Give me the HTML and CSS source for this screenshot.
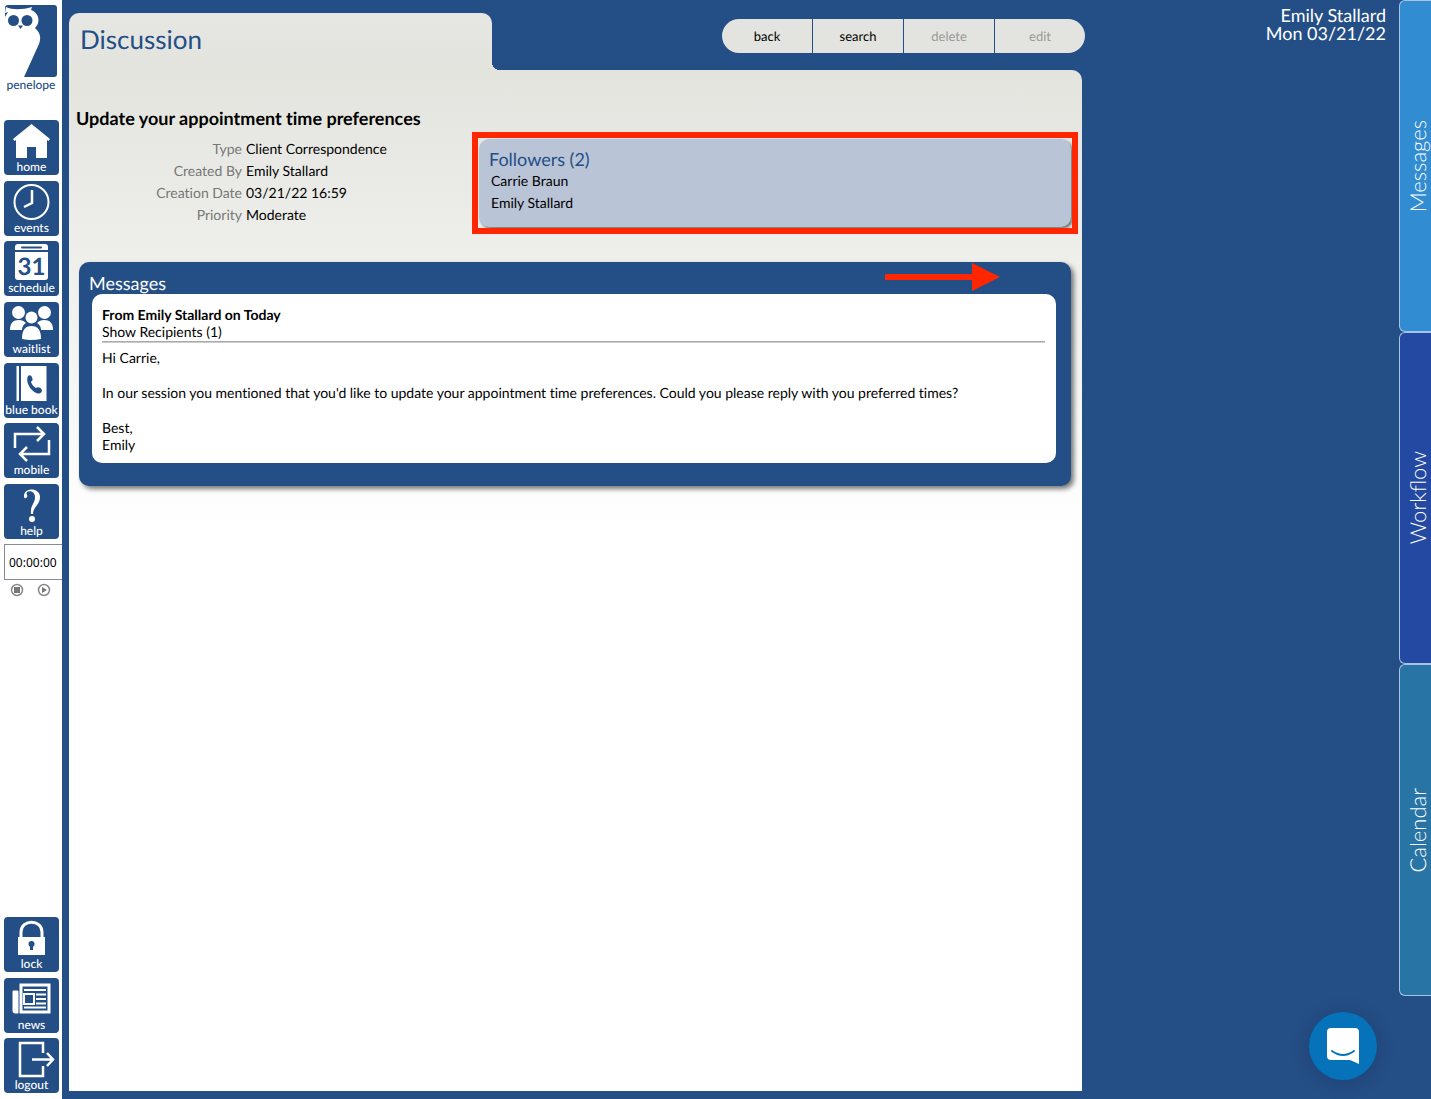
FILE: index.html
```html
<!DOCTYPE html>
<html lang="en">
<head>
  <meta charset="utf-8">
  <meta name="viewport" content="width=device-width, initial-scale=1.0">
  <title>Discussion</title>
  <link rel="stylesheet" href="styles.css">
</head>

<body>
  <!-- left navigation -->
  <nav class="sidebar">
    <a class="logo" href="#">
      <svg width="52" height="72" viewBox="0 0 52 72">
        <rect width="52" height="72" rx="3" fill="#244e86"/>
        <path d="M0 8L1 2C7 5 17 5 27 2L26 5C31 7 33.500 11 33.500 15C33.500 18 32 21 30 23C36 28 36 34 34 39L19 72H0V12L3 7Z" fill="#fff"/>
        <circle cx="8.500" cy="15.500" r="5.500" fill="#244e86"/>
        <circle cx="22" cy="15.500" r="5.500" fill="#244e86"/>
        <path d="M13 20.500H18L15.500 24Z" fill="#244e86"/>
      </svg>
      <span>penelope</span>
    </a>

    <div class="menu menuTop">
      <a class="item" href="#">
        <svg viewBox="0 0 55 40"><path d="M27.500 4L46 19L44.500 21L43 20V38H32V27H23V38H12V20L10.500 21L9 19Z" fill="#fff"/></svg>
        <span>home</span>
      </a>
      <a class="item" href="#">
        <svg viewBox="0 0 55 40" fill="none" stroke="#fff" stroke-width="2"><circle cx="27.500" cy="21" r="17"/><path d="M28 9V22L20 26" stroke-width="2.500"/></svg>
        <span>events</span>
      </a>
      <a class="item" href="#">
        <svg viewBox="0 0 55 40"><path d="M14 3H41Q44 3 44 6V9H11V6Q11 3 14 3ZM11 11H44V36Q44 39 41 39H14Q11 39 11 36Z" fill="#fff"/><path d="M18 6.500H37" stroke="#244e86" stroke-width="2" stroke-linecap="round"/><text class="calDay" x="27.500" y="34" text-anchor="middle">31</text></svg>
        <span>schedule</span>
      </a>
      <a class="item" href="#">
        <svg viewBox="0 0 55 40" fill="#fff">
          <circle cx="14.500" cy="10.500" r="6.500"/><circle cx="40.500" cy="10.500" r="6.500"/>
          <path d="M6 28C6 21 9 18 15 18C18 18 20 19 22 21C19 23 18 25 18 28Z"/>
          <path d="M49 28C49 21 46 18 40 18C37 18 35 19 33 21C36 23 37 25 37 28Z"/>
          <circle cx="27.500" cy="15.500" r="6"/>
          <path d="M18 37C18 28 21 24 27.500 24S37 28 37 37Q27.500 39 18 37Z"/>
        </svg>
        <span>waitlist</span>
      </a>
      <a class="item" href="#">
        <svg viewBox="0 0 55 40"><path d="M12.500 3H15V38H12.500ZM17 3H42.500V38H17Z" fill="#fff"/><path d="M24 13C26 11 28 13 28.500 16C29 18 27 18 27 19C28 22 30 24 32 25C34 23 38 25 38 28C36 32 32 31 28 27C24 23 22 17 24 13Z" fill="#244e86"/></svg>
        <span>blue book</span>
      </a>
      <a class="item" href="#">
        <svg viewBox="0 0 55 40" fill="none" stroke="#fff" stroke-width="2.500"><path d="M11 25V11H40M33 4L40 11L33 18M45 17V31H16M23 24L16 31L23 38"/></svg>
        <span>mobile</span>
      </a>
      <a class="item" href="#">
        <svg viewBox="0 0 55 40" fill="#fff"><path d="M20 13C19 3 36 3 36 13C36 21 29 23 29 30H27C26 21 31 20 31 13C31 6 22 6 22.500 10C25 13 21 16 20 13Z"/><circle cx="28" cy="35" r="3"/></svg>
        <span>help</span>
      </a>
    </div>

    <input class="timer" type="text" value="00:00:00" aria-label="Timer" readonly>
    <div class="timerButtons">
      <button type="button" aria-label="Stop">
        <svg width="14" height="14"><circle cx="7" cy="7" r="5.500" fill="none" stroke="#888" stroke-width="1.500"/><rect x="4" y="4" width="6" height="6" fill="#777"/></svg>
      </button>
      <button type="button" aria-label="Start">
        <svg width="14" height="14"><circle cx="7" cy="7" r="5.500" fill="none" stroke="#888" stroke-width="1.500"/><path d="M5 4L10 7L5 10Z" fill="#777"/></svg>
      </button>
    </div>

    <div class="menu menuBottom">
      <a class="item" href="#">
        <svg viewBox="0 0 55 40"><path d="M17 21V15C17 2 38 2 38 15V21" fill="none" stroke="#fff" stroke-width="3"/><path d="M14 20H41V38H14Z" fill="#fff"/><circle cx="27.500" cy="27" r="3" fill="#244e86"/><path d="M26 27H29V33H26Z" fill="#244e86"/></svg>
        <span>lock</span>
      </a>
      <a class="item" href="#">
        <svg viewBox="0 0 55 40" fill="none" stroke="#fff"><path d="M17 7H45V34H17Z" stroke-width="3"/><path d="M9 13H14V35H11Q9 35 9 33Z" fill="#fff"/><path d="M20 12H42M20 29.500H42" stroke-width="2"/><path d="M20 16H30V26H20Z" fill="#244e86" stroke-width="2"/><path d="M32 16.500H42M32 21H42M32 25.500H42" stroke-width="2"/></svg>
        <span>news</span>
      </a>
      <a class="item" href="#">
        <svg viewBox="0 0 55 40" fill="none" stroke="#fff" stroke-width="2.500"><path d="M39 15V5H16V38H39V28M28 21.500H49M43 15L49 21.500L43 28"/></svg>
        <span>logout</span>
      </a>
    </div>
  </nav>

  <!-- page content -->
  <main class="content">
    <header class="top">
      <div class="folderTab"><h1>Discussion</h1></div>
      <div class="toolbar">
        <button type="button">back</button>
        <button type="button">search</button>
        <button type="button" disabled>delete</button>
        <button type="button" disabled>edit</button>
      </div>
    </header>

    <div class="folder">
      <div class="summary">
        <div class="details">
          <h2>Update your appointment time preferences</h2>
          <dl>
            <dt>Type</dt><dd>Client Correspondence</dd>
            <dt>Created By</dt><dd>Emily Stallard</dd>
            <dt>Creation Date</dt><dd>03/21/22 16:59</dd>
            <dt>Priority</dt><dd>Moderate</dd>
          </dl>
        </div>
        <section class="followers">
          <h3>Followers (2)</h3>
          <ul>
            <li>Carrie Braun</li>
            <li>Emily Stallard</li>
          </ul>
        </section>
      </div>

      <section class="messages">
        <h3>Messages</h3>
        <svg class="arrow" width="115" height="28"><path d="M0 11H87V0L115 14L87 28V17H0Z" fill="#ff2600"/></svg>
        <article class="message">
          <h4>From Emily Stallard on Today</h4>
          <a class="recipients" href="#">Show Recipients (1)</a>
          <hr>
          <p>Hi Carrie,</p>
          <p>In our session you mentioned that you'd like to update your appointment time preferences. Could you please reply with you preferred times?</p>
          <p>Best,<br>Emily</p>
        </article>
      </section>
    </div>
  </main>

  <div class="user">
    <div>Emily Stallard</div>
    <div>Mon 03/21/22</div>
  </div>

  <!-- drawers on the right edge -->
  <div class="drawers">
    <button type="button" class="drawer drawerMessages"><span>Messages</span></button>
    <button type="button" class="drawer drawerWorkflow"><span>Workflow</span></button>
    <button type="button" class="drawer drawerCalendar"><span>Calendar</span></button>
  </div>

  <button type="button" class="chat" aria-label="Open chat">
    <svg width="32" height="36" viewBox="0 0 32 36"><path d="M4 0H28Q32 0 32 4V36C29 35 26 33 23 32H4Q0 32 0 28V4Q0 0 4 0Z" fill="#fff"/><path d="M5 23Q16 31 27 23" fill="none" stroke="#0572b9" stroke-width="2" stroke-linecap="round"/></svg>
  </button>
</body>
</html>
```
FILE: styles.css
```css
* {
  box-sizing: border-box;
}
body {
  margin: 0;
  min-height: 100vh;
  display: grid;
  grid-template-columns: 62px minmax(0, 1fr) 314px 32px;
  background-color: #244e86;
  font-family: Lato, "Liberation Sans", sans-serif;
  font-size: 14px;
  line-height: 17px;
  font-variant-ligatures: none;
  text-rendering: geometricPrecision;
  color: #000;
}
h1, h2, h3, h4, p, ul, dl, dd {
  margin: 0;
  padding: 0;
}
a {
  color: inherit;
  text-decoration: none;
}
button {
  border: 0;
  padding: 0;
  font-family: inherit;
  text-rendering: inherit;
  cursor: pointer;
}

/* sidebar */
.sidebar {
  display: flex;
  flex-direction: column;
  padding: 5px 0 6px 4px;
  background-color: #fff;
}
.logo {
  display: flex;
  flex-direction: column;
  align-items: center;
  width: 54px;
  height: 115px;
  font-size: 12px;
  line-height: 16px;
  font-weight: 500;
  color: #244e86;
}
.menu {
  display: flex;
  flex-direction: column;
  justify-content: space-between;
  width: 55px;
}
.menuTop {
  height: 419px;
}
.menuBottom {
  height: 176px;
  margin-top: auto;
}
.item {
  display: flex;
  flex-direction: column;
  align-items: center;
  height: 55px;
  border-radius: 4px;
  background-color: #244e86;
  color: #fff;
  font-size: 12px;
  line-height: 13px;
  font-weight: 500;
  white-space: nowrap;
}
.item svg {
  flex: none;
  width: 55px;
  height: 40px;
}
.calDay {
  fill: #244e86;
  font-size: 24px;
  font-weight: bold;
}
.timer {
  height: 36px;
  margin-top: 5px;
  width: 58px;
  padding: 0 0 0 4px;
  border: 1px solid #8a8a96;
  border-right: 0;
  font-family: "Noto Sans", sans-serif;
  font-size: 12px;
}
.timerButtons {
  display: flex;
  gap: 13px;
  padding: 3px 6px;
}
.timerButtons button {
  display: flex;
  background: none;
}

/* folder */
.content {
  display: flex;
  flex-direction: column;
  padding: 13px 0 8px 7px;
}
.top {
  display: flex;
  justify-content: space-between;
}
.folderTab {
  position: relative;
  width: 423px;
  height: 57px;
  padding: 9px 11px;
  border-radius: 10px 10px 0 0;
  background: linear-gradient(#e6e6e3, #e3e4de);
}
/* inner curve between the tab and the folder */
.folderTab::after {
  content: "";
  position: absolute;
  left: 100%;
  bottom: 0;
  width: 8px;
  height: 8px;
  background: radial-gradient(circle at 100% 0, transparent 8px, #e3e4de 8px);
}
h1 {
  font-size: 26px;
  line-height: 34px;
  font-weight: normal;
  color: #244e86;
}
.toolbar {
  display: grid;
  grid-template-columns: repeat(4, 90px);
  gap: 1px;
  height: 34px;
  margin-top: 6px;
  border-radius: 17px;
  overflow: hidden;
}
.toolbar button {
  background-color: #e3e4df;
  font-size: 13px;
  color: #000;
}
.toolbar button:disabled {
  color: #999;
}
.folder {
  flex: 1;
  margin-right: 3px;
  padding: 37px 11px 20px 10px;
  border-radius: 0 10px 0 0;
  background: linear-gradient(#e3e4de, #fff 460px);
}
.summary {
  display: grid;
  grid-template-columns: 400px minmax(0, 1fr);
  margin-bottom: 35px;
}
.details {
  margin-left: -3px;
}
h2 {
  font-size: 18px;
  line-height: 22px;
}
dl {
  display: grid;
  grid-template-columns: 166px 1fr;
  column-gap: 4px;
  padding-top: 9px;
  line-height: 22px;
}
dt {
  text-align: right;
  color: #777;
}
.followers {
  position: relative;
  margin-top: 32px;
  height: 88px;
  padding: 9px 10px;
  border-radius: 10px;
  background-color: #b9c4d7;
  box-shadow: 2px 2px 3px #777;
}
/* red highlight frame */
.followers::after {
  content: "";
  position: absolute;
  inset: -7px;
  border: 6px solid #ff2600;
}
h3 {
  font-size: 18px;
  line-height: 22px;
  font-weight: normal;
}
.followers h3 {
  color: #244e86;
}
.followers ul {
  padding-left: 2px;
  list-style: none;
  line-height: 22px;
}

/* messages */
.messages {
  position: relative;
  padding: 10px 15px 23px 13px;
  border-radius: 10px;
  background-color: #244e86;
  box-shadow: 3px 3px 5px #777;
}
.messages h3 {
  margin-left: -3px;
  color: #fff;
}
.arrow {
  position: absolute;
  top: 1px;
  right: 71px;
}
.message {
  padding: 12px 11px 10px 10px;
  border-radius: 10px;
  background-color: #fff;
}
.message h4 {
  font-size: 14px;
}
.recipients {
  display: block;
}
.message hr {
  margin: 1px 0 6px;
  border: 0;
  border-top: 1px solid #aaa;
  border-bottom: 1px solid #ccc;
}
.message p + p {
  margin-top: 18px;
}

/* right side */
.user {
  padding: 6px 13px 0 0;
  text-align: right;
  font-size: 18px;
  line-height: 18px;
  color: #fff;
}
.drawers {
  display: flex;
  flex-direction: column;
  height: 996px;
}
.drawer {
  flex: 1;
  display: flex;
  align-items: center;
  justify-content: center;
  padding-left: 3px;
  border: 1px solid #a6c4e4;
  border-right: 0;
  border-radius: 6px 0 0 6px;
  color: #fff;
  font-size: 22px;
  font-weight: 300;
}
.drawer span {
  writing-mode: vertical-rl;
  transform: rotate(180deg);
}
.drawerMessages {
  background-color: #318cd1;
}
.drawerWorkflow {
  background-color: #2449a3;
}
.drawerCalendar {
  background-color: #2874a5;
}
.chat {
  position: fixed;
  right: 54px;
  bottom: 19px;
  display: flex;
  align-items: center;
  justify-content: center;
  width: 68px;
  height: 68px;
  border-radius: 50%;
  background-color: #0572b9;
  box-shadow: 0 2px 20px rgba(0, 0, 0, 0.15);
}
```
